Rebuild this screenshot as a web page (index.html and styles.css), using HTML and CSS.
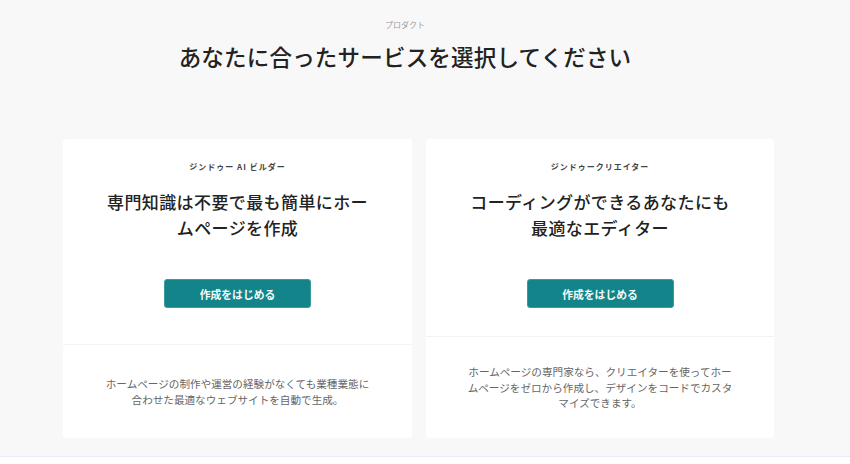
FILE: index.html
```html
<!DOCTYPE html>
<html lang="ja">
<head>
<meta charset="utf-8">
<title>プロダクト</title>
<link rel="stylesheet" href="styles.css">
</head>
<body>
<main class="page">
  <header class="intro">
    <p class="eyebrow">プロダクト</p>
    <h1 class="headline">あなたに合ったサービスを選択してください</h1>
  </header>
  <section class="cards">
    <article class="card">
      <div class="card-top card-top--tall">
        <p class="card-label">ジンドゥー AI ビルダー</p>
        <h2 class="card-title">専門知識は不要で最も簡単にホームページを作成</h2>
        <a class="btn" href="#">作成をはじめる</a>
      </div>
      <div class="card-bottom">
        <p class="card-desc">ホームページの制作や運営の経験がなくても業種業態に合わせた最適なウェブサイトを自動で生成。</p>
      </div>
    </article>
    <article class="card">
      <div class="card-top">
        <p class="card-label">ジンドゥークリエイター</p>
        <h2 class="card-title">コーディングができるあなたにも最適なエディター</h2>
        <a class="btn" href="#">作成をはじめる</a>
      </div>
      <div class="card-bottom">
        <p class="card-desc">ホームページの専門家なら、クリエイターを使ってホームページをゼロから作成し、デザインをコードでカスタマイズできます。</p>
      </div>
    </article>
  </section>
</main>
</body>
</html>
```
FILE: styles.css
```css
* { box-sizing: border-box; }
html, body { margin: 0; padding: 0; }
body {
  width: 850px;
  height: 464px;
  overflow: hidden;
  background: #fefeff;
  font-family: "Noto Sans CJK JP", "Noto Sans", sans-serif;
  color: #222;
}
.page {
  background: #f8f8f8;
  border-bottom: 1px solid #ebeafb;
  padding: 19px 0 18px;
}
.intro {
  text-align: center;
  padding-right: 40px;
}
.eyebrow {
  margin: 0;
  font-size: 8px;
  line-height: 12px;
  color: #9a9a9a;
}
.headline {
  margin: 9px 0 0;
  font-size: 22.5px;
  line-height: 32px;
  font-weight: 500;
  letter-spacing: 0.2px;
  color: #222;
}
.cards {
  margin-top: 67px;
  padding-left: 63px;
  display: grid;
  grid-template-columns: 349px 348px;
  column-gap: 14px;
}
.card {
  background: #fff;
  border-radius: 3px;
  height: 299px;
  display: flex;
  flex-direction: column;
}
.card-top {
  padding: 22px 20px 28px;
  display: flex;
  flex-direction: column;
  align-items: center;
  text-align: center;
}
.card-top--tall { padding-bottom: 36px; }
.card-label {
  margin: 0;
  font-size: 8px;
  line-height: 12px;
  font-weight: 700;
  letter-spacing: 1px;
  color: #444;
}
.card-title {
  margin: 16px 0 0;
  max-width: 272px;
  font-size: 17px;
  letter-spacing: 0.4px;
  line-height: 26px;
  font-weight: 500;
  color: #222;
}
.btn {
  margin-top: 38px;
  width: 147px;
  height: 29px;
  display: flex;
  align-items: center;
  justify-content: center;
  background: #12848a;
  border: 1px solid #3a9aa0;
  border-radius: 3px;
  color: #f4fbfb;
  text-decoration: none;
  font-size: 10.8px;
  font-weight: 700;
}
.card-bottom {
  flex: 1;
  border-top: 1px solid #f3f3f3;
  display: flex;
  align-items: center;
  justify-content: center;
  padding: 0 30px;
}
.card-desc {
  margin: 0;
  max-width: 272px;
  text-align: center;
  font-size: 10.6px;
  line-height: 15.5px;
  color: #666;
}
```
